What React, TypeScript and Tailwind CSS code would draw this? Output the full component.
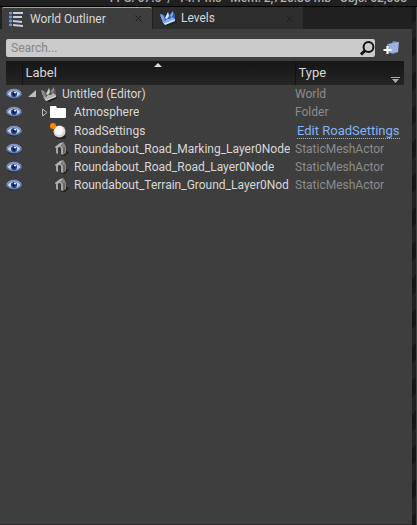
import React from "react";

function Eye() {
  return (
    <svg width="16" height="14" viewBox="0 0 16 14" aria-hidden="true">
      <path d="M1 9.5C4 13.5 11 13.5 15 9L15 7.5H1Z" fill="#252730" />
      <path d="M.8 7.2C4 1.2 12 1.2 15.2 7.2 12 11.8 4 11.8.8 7.2Z" fill="#c9d3e6" stroke="#6078ad" strokeWidth="1.5" />
      <path d="M1 6C4 1.3 12 1.3 15 6" fill="none" stroke="#7f95c6" strokeWidth="1.4" />
      <circle cx="8" cy="7" r="3.1" fill="#29448a" />
      <circle cx="8" cy="7" r="1.5" fill="#0c1433" />
      <circle cx="9" cy="5.6" r="1" fill="#fff" />
    </svg>
  );
}

function Landscape({ blue }: { blue?: boolean }) {
  const c = blue ? ["#86b4f6", "#2f5cb5", "#d6e6fb", "#7fa3e0"] : ["#b4b4b4", "#555", "#cfcfcf", "#8a8a8a"];
  return (
    <svg width="18" height="16" viewBox="0 0 18 16" aria-hidden="true" className="shrink-0">
      <path d="M5 14L16 11 18 12 9 16Z" fill="#202020" />
      <path d="M1 4L5 5 7 7 9 2 11 5 14 1 16 5 16 11 6 15 3 11Z" fill={c[1]} />
      <path d="M1 4L4 5 6 10 4 11 2 8Z" fill={c[3]} />
      <path d="M9 2L10 6 8 9 6 8Z" fill={c[2]} />
      <path d="M14 1L14 5 12 8 11 5Z" fill={c[3]} />
      <path d="M3 10L6 11 8 9 11 9 13 7 16 9 6 13Z" fill={c[0]} />
      <path d="M3 11L6 13 16 9V11L6 15Z" fill={c[2]} />
    </svg>
  );
}

function Outliner() {
  return (
    <svg width="16" height="16" viewBox="0 0 16 16" aria-hidden="true" className="shrink-0">
      <path d="M2.5 1V14" stroke="#4c6799" strokeWidth="2" />
      <path d="M1 1h3v2H1zM1 5h3v2H1zM1 9h3v2H1zM1 13h3v2H1z" fill="#6d91d4" />
      <path d="M5 1l10 0v2L5 3zM5 5l9 0v2L5 7zM5 9l9 1v2L5 11zM5 13l10 1v2L5 15z" fill="#c5cedd" />
    </svg>
  );
}

function Mesh() {
  return (
    <svg width="16" height="16" viewBox="0 0 16 16" aria-hidden="true" className="shrink-0">
      <path d="M7 15L12 10 15 11 11 15Z" fill="#202020" />
      <path d="M7 3L10 2 12 6 12 12 9 14V8L8 5Z" fill="#858585" />
      <path d="M1 6L6 3 9 7V14L7 13V8L6 6 4 7V13L2 12V7Z" fill="#a6a6a6" />
      <path d="M4 7L6 6 7 8V13L6 12V9L4 10Z" fill="#333" />
      <path d="M10 6V13" stroke="#4a4a4a" />
      <path d="M1 6L6 2 10 1 7 4 2 7Z" fill="#b4b4b4" />
    </svg>
  );
}

function Folder() {
  return (
    <svg width="16" height="14" viewBox="0 0 16 14" aria-hidden="true" className="shrink-0">
      <path d="M0 2Q0 1 1 1H6L7 3H15Q16 3 16 4V12Q16 13 15 13H1Q0 13 0 12Z" fill="#fff" />
    </svg>
  );
}

function Ball() {
  return (
    <svg width="16" height="16" viewBox="0 0 16 16" aria-hidden="true" className="shrink-0">
      <ellipse cx="11" cy="14" rx="5" ry="2" fill="#242424" />
      <circle cx="9.5" cy="8.5" r="6" fill="#d8d6d2" />
      <circle cx="9" cy="7.5" r="4.5" fill="#f8f6f1" />
      <circle cx="3" cy="3" r="3" fill="#ff8500" />
    </svg>
  );
}

function Cross() {
  return (
    <svg width="7" height="7" viewBox="0 0 7 7" aria-hidden="true">
      <path d="M.5.5l6 6M6.5.5l-6 6" stroke="#1c1c1c" strokeWidth="1" />
    </svg>
  );
}

type Item = { label: string; type: string; kind: "world" | "folder" | "ball" | "mesh" };

const items: Item[] = [
  { label: "Untitled (Editor)", type: "World", kind: "world" },
  { label: "Atmosphere", type: "Folder", kind: "folder" },
  { label: "RoadSettings", type: "Edit RoadSettings", kind: "ball" },
  { label: "Roundabout_Road_Marking_Layer0Node", type: "StaticMeshActor", kind: "mesh" },
  { label: "Roundabout_Road_Road_Layer0Node", type: "StaticMeshActor", kind: "mesh" },
  { label: "Roundabout_Terrain_Ground_Layer0Nod", type: "StaticMeshActor", kind: "mesh" },
];

function LabelCell({ item }: { item: Item }) {
  if (item.kind === "world") {
    return (
      <div className="flex items-center pl-1.5">
        <button aria-label="Collapse world" className="mr-1">
          <svg width="8" height="8" viewBox="0 0 8 8"><path d="M8 0V7H0Z" fill="#bdbdbd" /></svg>
        </button>
        <Landscape />
        <span className="ml-1">{item.label}</span>
      </div>
    );
  }
  return (
    <div className="flex items-center pl-5">
      <span className="flex w-2 shrink-0">
        {item.kind === "folder" && (
          <button aria-label="Expand Atmosphere">
            <svg width="6" height="9" viewBox="0 0 6 9"><path d="M.5 1L5 4.5.5 8Z" fill="none" stroke="#bdbdbd" /></svg>
          </button>
        )}
      </span>
      <span className={`mr-2 flex w-4 shrink-0 ${item.kind === "mesh" ? "pl-1" : ""}`}>
        {item.kind === "folder" ? <Folder /> : item.kind === "ball" ? <Ball /> : <Mesh />}
      </span>
      <span className="overflow-hidden whitespace-nowrap">{item.label}</span>
    </div>
  );
}

export default function App() {
  return (
    <div className="flex h-screen flex-col overflow-hidden bg-[#202020] font-[Roboto,sans-serif] text-[12px] leading-4 text-[#d8d8d8]">
      <header className="flex h-[7px] shrink-0 items-end justify-end overflow-hidden border-b border-black bg-[#202020] pr-[10px] font-medium whitespace-pre text-[#b0b0b0]">
        FPS: 67.5  /  14.1 ms   Mem: 2,720.80 mb   Objs: 62,068
      </header>
      <div className="flex min-h-0 flex-1">
        <main className="flex min-w-0 flex-1 flex-col">
          <div role="tablist" className="flex h-[22px] shrink-0 pl-0.5 [text-shadow:1px_1px_#111]">
            <div className="flex w-[150px] items-center rounded-t-xs border-t border-[#c4ab1c] bg-[#3e3e3e] pr-[10px] pl-1.5">
              <Outliner />
              <button role="tab" aria-selected="true" className="ml-1.5 flex-1 text-left">World Outliner</button>
              <button aria-label="Close World Outliner"><Cross /></button>
            </div>
            <div className="ml-px flex w-[150px] items-center bg-[#2d2d2d] pr-[10px] pl-1.5">
              <Landscape blue />
              <button role="tab" aria-selected="false" className="ml-1 flex-1 text-left">Levels</button>
              <button aria-label="Close Levels"><Cross /></button>
            </div>
          </div>
          <section className="flex flex-1 flex-col border-b border-[#302b2e] bg-[#3e3e3e]">
            <div className="flex items-center gap-2 pt-[10px] pr-3 pb-1 pl-1.5">
              <div className="flex h-[18px] flex-1 items-center rounded-xs bg-[#cbcbcb]">
                <input aria-label="Search" placeholder="Search..." className="min-w-0 flex-1 bg-transparent px-[5px] text-[#222] outline-none placeholder:text-[#858585]" />
                <button aria-label="Find">
                  <svg width="16" height="16" viewBox="0 0 16 16"><circle cx="9.500" cy="7" r="4.900" fill="none" stroke="#111" strokeWidth="2" /><path d="M6 10.500L2 14.500" stroke="#111" strokeWidth="3" /></svg>
                </button>
              </div>
              <button aria-label="Create folder">
                <svg width="17" height="16" viewBox="0 0 17 16"><path d="M4 4L9 3 10 1 15 2V12L10 14 4 12Z" fill="#728cc4" /><path d="M6 4L16 2 15 12 7 13Z" fill="#9db2e0" /><path d="M4.500 6V14M.5 10H8.500" stroke="#fff" strokeWidth="2.200" /></svg>
              </button>
            </div>
            <div className="pr-2 pl-1.5">
              <table className="w-full table-fixed border-collapse">
                <colgroup><col className="w-4" /><col /><col className="w-[109px]" /></colgroup>
                <thead>
                  <tr className="h-6 bg-linear-to-b from-[#161616] to-[#242424]">
                    <th aria-label="Visibility" className="border-r border-[#111] p-0" />
                    <th className="border-r border-[#111] p-0 pl-[3px] text-left text-[13px] font-normal">
                      <div className="relative">Label
                        <svg className="absolute -top-0.5 left-[128px]" width="8" height="4" viewBox="0 0 8 4"><path d="M4 0L8 4H0Z" fill="#ddd" /></svg>
                      </div>
                    </th>
                    <th className="p-0 pl-[3px] text-left text-[13px] font-normal">
                      <div className="flex items-end justify-between pr-1">Type
                        <svg className="-mb-0.5" width="9" height="6" viewBox="0 0 9 6"><path d="M0 0H9V1H0ZM1 2H8L4.500 6Z" fill="#aaa" /></svg>
                      </div>
                    </th>
                  </tr>
                </thead>
                <tbody>
                  {items.map((item) => (
                    <tr key={item.label} className={item.kind === "ball" ? "h-[19px]" : "h-[18px]"}>
                      <td className="p-0"><button aria-label={`Toggle ${item.label}`} className="flex"><Eye /></button></td>
                      <td className="overflow-hidden p-0"><LabelCell item={item} /></td>
                      <td className="p-0 text-[#8c8c8c]">
                        {item.kind === "ball" ? <a href="#settings" className="ml-0.5 border-b border-dotted border-[#83b4f5] text-[13px] text-[#83b4f5]">{item.type}</a> : item.type}
                      </td>
                    </tr>
                  ))}
                </tbody>
              </table>
            </div>
          </section>
        </main>
        <div className="w-[5px] border-r border-[#444] bg-[repeating-linear-gradient(135deg,#171717_0px,#171717_12px,#222_12px,#222_24px)]" />
      </div>
    </div>
  );
}
